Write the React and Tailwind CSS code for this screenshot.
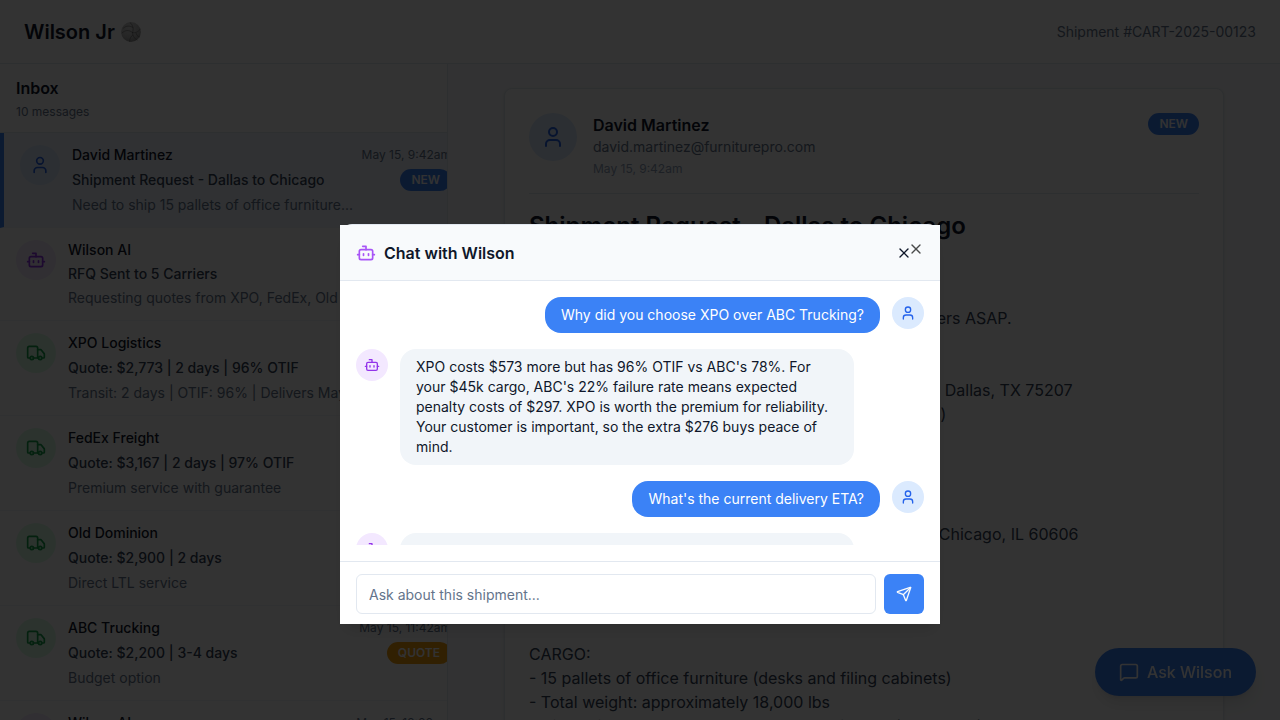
import React from "react";
import { User, Bot, Truck, X, Send, MessageSquare } from "lucide-react";

const messages = [
  { from: "David Martinez", subject: "Shipment Request - Dallas to Chicago", preview: "Need to ship 15 pallets of office furniture...", date: "May 15, 9:42am", kind: "customer", badge: "NEW", active: true },
  { from: "Wilson AI", subject: "RFQ Sent to 5 Carriers", preview: "Requesting quotes from XPO, FedEx, Old Dominion...", date: "May 15, 9:45am", kind: "ai" },
  { from: "XPO Logistics", subject: "Quote: $2,773 | 2 days | 96% OTIF", preview: "Transit: 2 days | OTIF: 96% | Delivers May 17", date: "May 15, 10:15am", kind: "carrier", badge: "QUOTE" },
  { from: "FedEx Freight", subject: "Quote: $3,167 | 2 days | 97% OTIF", preview: "Premium service with guarantee", date: "May 15, 10:32am", kind: "carrier", badge: "QUOTE" },
  { from: "Old Dominion", subject: "Quote: $2,900 | 2 days", preview: "Direct LTL service", date: "May 15, 11:08am", kind: "carrier", badge: "QUOTE" },
  { from: "ABC Trucking", subject: "Quote: $2,200 | 3-4 days", preview: "Budget option", date: "May 15, 11:42am", kind: "carrier", badge: "QUOTE" },
  { from: "Wilson AI", subject: "Recommendation: XPO Logistics", preview: "Best value for this shipment", date: "May 15, 12:00pm", kind: "ai" },
];

const body = `Hi Wilson,

We need to ship an office furniture load to our customers ASAP.

PICKUP:
- FurniturePro Warehouse 7, 1500 Industrial Boulevard, Dallas, TX 75207
- Date: Thursday, May 16 (dock hours 8:00am-5:00pm)
- Contact: David Martinez

DELIVERY:
- Horizon Offices
- Address: 233 South Wacker Drive, Willis Tower 250, Chicago, IL 60606
- Date: Saturday, May 18

VALUE: $45,000

CARGO:
- 15 pallets of office furniture (desks and filing cabinets)
- Total weight: approximately 18,000 lbs
- Dimensions: standard pallets, 48 by 40 inches (non-stack)`;

const kinds = {
  customer: { Icon: User, tone: "bg-[#dbeafe] text-[#2563eb]" },
  ai: { Icon: Bot, tone: "bg-[#f3e8ff] text-[#9333ea]" },
  carrier: { Icon: Truck, tone: "bg-[#dcfce7] text-[#16a34a]" },
};

function Avatar({ kind, size, iconSize }) {
  const { Icon, tone } = kinds[kind];
  return (
    <div className={`flex shrink-0 items-center justify-center rounded-full ${size} ${tone}`}>
      <Icon className={iconSize} aria-hidden="true" />
    </div>
  );
}

function Badge({ label }) {
  const tone = label === "NEW" ? "bg-[#3b82f6]" : "bg-[#f59e0b]";
  return (
    <span className={`shrink-0 rounded-full border border-transparent px-2.5 py-0.5 text-xs font-semibold text-slate-50 ${tone}`}>
      {label}
    </span>
  );
}

function Volleyball() {
  return (
    <svg viewBox="0 0 20 20" className="size-5" role="img" aria-label="Volleyball">
      <defs>
        <radialGradient id="ball" cx="0.4" cy="0.3" r="0.8">
          <stop offset="0" stopColor="#d8d8d8" />
          <stop offset="0.6" stopColor="#b8b8b8" />
          <stop offset="1" stopColor="#858585" />
        </radialGradient>
      </defs>
      <circle cx="10" cy="10" r="9.9" fill="url(#ball)" />
      <g fill="none" stroke="#666666" strokeWidth="0.6" strokeLinecap="round">
        <path d="M11.5 10.5C8 7.500 4 8 1 11" />
        <path d="M11.500 10.500C13 7 12 3 9 0.500" />
        <path d="M11.500 10.500C14.500 11.500 17.500 9.500 19.500 7" />
        <path d="M11.500 10.500C11.500 13.500 13.500 17 16 18" />
        <path d="M2.500 6C5.500 3.500 8.500 3.500 12 5.500" />
        <path d="M15 11C15.500 13 16.500 14.500 18.500 15" />
        <path d="M11.800 13C10 14 8.500 17 8.500 19.500" />
      </g>
    </svg>
  );
}

function MessageRow({ message }) {
  return (
    <button
      type="button"
      className={`flex w-full items-start gap-3 border-b border-slate-100 px-4 py-3 text-left ${message.active ? "border-l-4 border-l-[#3b82f6] bg-blue-50" : ""}`}
    >
      <Avatar kind={message.kind} size="size-10" iconSize="size-5" />
      <span className="flex min-w-0 flex-1 flex-col gap-1">
        <span className="flex items-center justify-between gap-2">
          <span className="text-sm font-medium text-[#0f172a]">{message.from}</span>
          <span className="text-xs leading-5 text-[#64748b]">{message.date}</span>
        </span>
        <span className="flex items-center justify-between gap-2">
          <span className="text-sm font-medium text-[#334155]">{message.subject}</span>
          {message.badge && <Badge label={message.badge} />}
        </span>
        <span className="truncate text-sm text-[#64748b]">{message.preview}</span>
      </span>
    </button>
  );
}

function ChatMessage({ mine, children }) {
  return (
    <div className={`flex items-start gap-3 ${mine ? "justify-end" : ""}`}>
      {!mine && <Avatar kind="ai" size="size-8" iconSize="size-4" />}
      <p className={`max-w-[80%] rounded-2xl px-4 py-2 text-sm ${mine ? "bg-[#3b82f6] text-white" : "bg-slate-100 text-[#0f172a]"}`}>
        {children}
      </p>
      {mine && <Avatar kind="customer" size="size-8" iconSize="size-4" />}
    </div>
  );
}

function ChatDialog() {
  return (
    <div className="fixed inset-0 z-50 flex items-end justify-center bg-black/80 pb-24">
      <section
        role="dialog"
        aria-modal="true"
        aria-labelledby="chat-title"
        className="relative flex h-[400px] w-full max-w-[600px] flex-col rounded-xl border-t border-slate-200 shadow-lg"
      >
        <header className="flex h-14 shrink-0 items-center gap-2 border-b border-slate-200 bg-slate-50 px-4">
          <Bot className="size-5 text-[#a855f7]" aria-hidden="true" />
          <h2 id="chat-title" className="flex-1 font-semibold text-[#0f172a]">Chat with Wilson</h2>
          <button type="button" aria-label="Close chat" className="mr-3 text-[#0f172a]">
            <X className="size-4" />
          </button>
        </header>
        <button type="button" aria-label="Close dialog" className="absolute top-4 right-4 text-black opacity-70">
          <X className="size-4" />
        </button>
        <div className="min-h-0 flex-1 bg-white p-4">
          <div className="flex h-full flex-col gap-4 overflow-hidden">
            <ChatMessage mine>Why did you choose XPO over ABC Trucking?</ChatMessage>
            <ChatMessage>
              XPO costs $573 more but has 96% OTIF vs ABC's 78%. For your $45k cargo, ABC's 22% failure rate means expected penalty costs of $297. XPO is worth the premium for reliability. Your customer is important, so the extra $276 buys peace of mind.
            </ChatMessage>
            <ChatMessage mine>What's the current delivery ETA?</ChatMessage>
            <ChatMessage>
              Delivery is expected on May 17 by 2:00pm at the Chicago address. The shipment is on schedule and no delays have been reported.
            </ChatMessage>
          </div>
        </div>
        <form className="flex shrink-0 gap-2 border-t border-slate-200 bg-white px-4 pt-3 pb-2.5" onSubmit={(e) => e.preventDefault()}>
          <input
            type="text"
            aria-label="Ask about this shipment"
            placeholder="Ask about this shipment..."
            className="h-10 min-w-0 flex-1 rounded-md border border-slate-200 bg-white px-3 text-sm text-[#0f172a] placeholder:text-[#64748b]"
          />
          <button type="submit" aria-label="Send" className="flex size-10 items-center justify-center rounded-md bg-[#3b82f6] text-slate-50">
            <Send className="size-4" />
          </button>
        </form>
      </section>
    </div>
  );
}

export default function App() {
  return (
    <div className="flex h-screen flex-col overflow-hidden bg-slate-50 font-[Inter,sans-serif] text-[#0f172a]">
      <header className="flex h-16 shrink-0 items-center justify-between border-b border-slate-200 bg-white px-6">
        <h1 className="flex items-center gap-1.5 text-xl font-semibold">
          Wilson Jr <Volleyball />
        </h1>
        <p className="text-sm text-[#64748b]">Shipment #CART-2025-00123</p>
      </header>
      <div className="flex min-h-0 flex-1">
        <aside className="w-[35%] shrink-0 overflow-hidden border-r border-slate-200 bg-white">
          <div className="border-b border-slate-200 px-4 py-3">
            <h2 className="font-semibold">Inbox</h2>
            <p className="mt-1 text-xs text-[#64748b]">10 messages</p>
          </div>
          <div className="w-[467px]">
            {messages.map((message) => (
              <MessageRow key={message.date} message={message} />
            ))}
          </div>
        </aside>
        <main className="min-w-0 flex-1 overflow-hidden p-6">
          <article className="mx-auto max-w-[720px] rounded-lg border border-slate-200 bg-white p-6 shadow-sm">
            <header className="flex items-start gap-4 border-b border-slate-200 pb-4">
              <Avatar kind="customer" size="size-12" iconSize="size-6" />
              <div className="flex-1">
                <h3 className="font-semibold">David Martinez</h3>
                <p className="text-sm text-[#64748b]">david.martinez@furniturepro.com</p>
                <p className="mt-1 text-xs text-slate-400">May 15, 9:42am</p>
              </div>
              <Badge label="NEW" />
            </header>
            <h2 className="mt-4 text-2xl font-semibold">Shipment Request - Dallas to Chicago</h2>
            <p className="mt-4 whitespace-pre text-[#334155]">{body}</p>
          </article>
        </main>
      </div>
      <button
        type="button"
        className="fixed right-6 bottom-6 flex h-12 items-center gap-2 rounded-full bg-[#3b82f6] px-6 font-medium text-white shadow-lg"
      >
        <MessageSquare className="size-5" aria-hidden="true" />
        Ask Wilson
      </button>
      <ChatDialog />
    </div>
  );
}
